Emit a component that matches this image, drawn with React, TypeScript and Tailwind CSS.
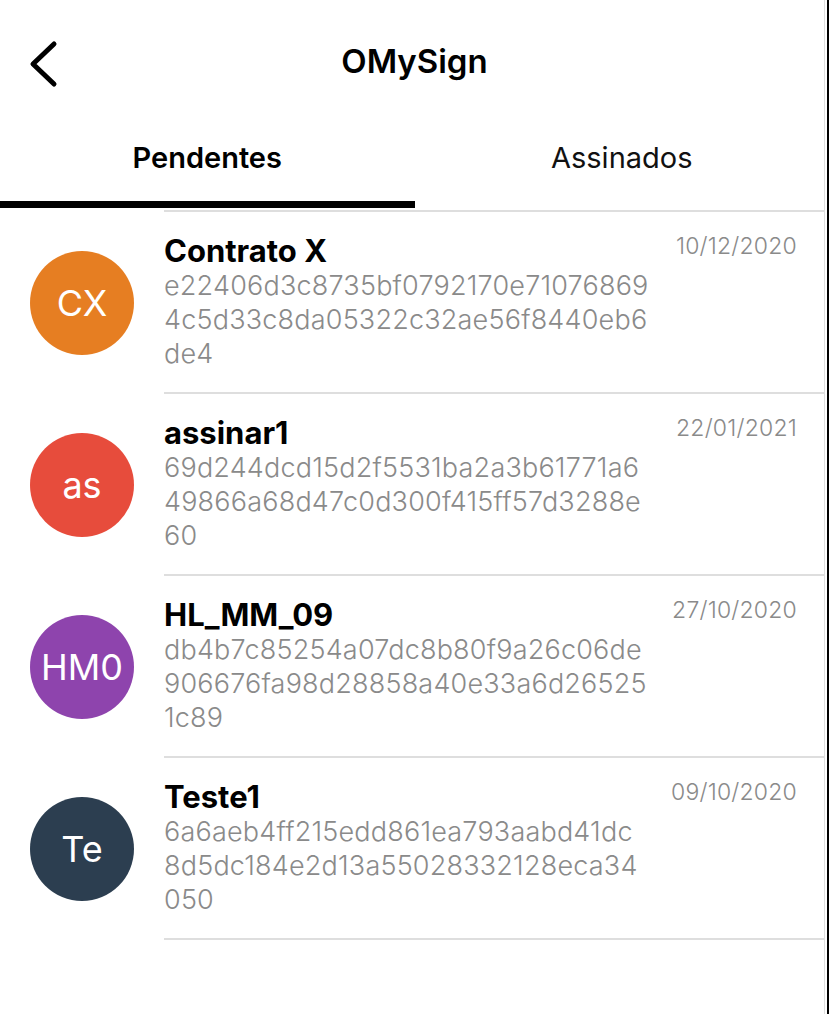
import { useState } from 'react'

interface Doc {
  initials: string
  name: string
  hash: string[]
  date: string
  color: string
}

const docs: Doc[] = [
  {
    initials: 'CX',
    name: 'Contrato X',
    hash: ['e22406d3c8735bf0792170e71076869', '4c5d33c8da05322c32ae56f8440eb6', 'de4'],
    date: '10/12/2020',
    color: 'bg-[#e67e22]',
  },
  {
    initials: 'as',
    name: 'assinar1',
    hash: ['69d244dcd15d2f5531ba2a3b61771a6', '49866a68d47c0d300f415ff57d3288e', '60'],
    date: '22/01/2021',
    color: 'bg-[#e74c3c]',
  },
  {
    initials: 'HM0',
    name: 'HL_MM_09',
    hash: ['db4b7c85254a07dc8b80f9a26c06de', '906676fa98d28858a40e33a6d26525', '1c89'],
    date: '27/10/2020',
    color: 'bg-[#8e44ad]',
  },
  {
    initials: 'Te',
    name: 'Teste1',
    hash: ['6a6aeb4ff215edd861ea793aabd41dc', '8d5dc184e2d13a55028332128eca34', '050'],
    date: '09/10/2020',
    color: 'bg-[#2c3e50]',
  },
]

function DocRow({ doc }: { doc: Doc }) {
  return (
    <div className="flex">
      <div className="w-[164px] shrink-0 flex items-center pl-[30px]">
        <div className={`w-[104px] h-[104px] rounded-full ${doc.color} flex items-center justify-center text-white text-[36px] leading-none`}>
          {doc.initials}
        </div>
      </div>
      <div className="flex-1 flex items-start justify-between border-b-2 border-[#dedede] pt-[21px] pb-[21px] pr-[27px]">
        <div>
          <p className="text-[31px] leading-[36px] font-bold text-black">{doc.name}</p>
          {doc.hash.map(line => (
            <p key={line} className="text-[27px] leading-[34px] font-light tracking-[0.2px] text-[#8a8a8a] whitespace-nowrap">
              {line}
            </p>
          ))}
        </div>
        <p className="text-[23px] leading-[26px] font-light tracking-[0.2px] text-[#8a8a8a]">{doc.date}</p>
      </div>
    </div>
  )
}

export default function App() {
  const [tab, setTab] = useState<'pend' | 'ass'>('pend')

  return (
    <div className="relative min-h-screen bg-white font-['Inter','Noto_Sans',sans-serif]">
      {/* header */}
      <div className="relative h-[124px] flex items-center justify-center">
        <button className="absolute left-[28px] top-[40px]">
          <svg width="36" height="50" viewBox="0 0 36 50">
            <path d="M26 4 L5 24 L26 44" fill="none" stroke="#000" strokeWidth="5" strokeLinecap="round" strokeLinejoin="round" />
          </svg>
        </button>
        <h1 className="text-[33px] font-semibold text-black">OMySign</h1>
      </div>

      {/* tabs */}
      <div className="flex">
        <button onClick={() => setTab('pend')} className="flex-1 flex flex-col">
          <span className={`pt-[17px] pb-[26px] text-[29px] leading-[34px] text-black ${tab === 'pend' ? 'font-semibold' : 'font-normal'}`}>
            Pendentes
          </span>
          <span className={`h-[7px] ${tab === 'pend' ? 'bg-black' : 'bg-transparent'}`} />
        </button>
        <button onClick={() => setTab('ass')} className="flex-1 flex flex-col">
          <span className={`pt-[17px] pb-[26px] text-[29px] leading-[34px] text-[#111] ${tab === 'ass' ? 'font-semibold' : 'font-normal'}`}>
            Assinados
          </span>
          <span className={`h-[7px] ${tab === 'ass' ? 'bg-black' : 'bg-transparent'}`} />
        </button>
      </div>

      {/* list */}
      <div className="mr-[5px]">
        <div className="mt-[2px] ml-[164px] border-t-2 border-[#dedede]" />
        {docs.map(d => (
          <DocRow key={d.name} doc={d} />
        ))}
      </div>

      {/* window edge */}
      <div className="absolute top-0 bottom-0 right-[4px] w-[1px] bg-[#dedede]" />
      <div className="absolute top-0 bottom-0 right-0 w-[2px] bg-black" />
    </div>
  )
}
